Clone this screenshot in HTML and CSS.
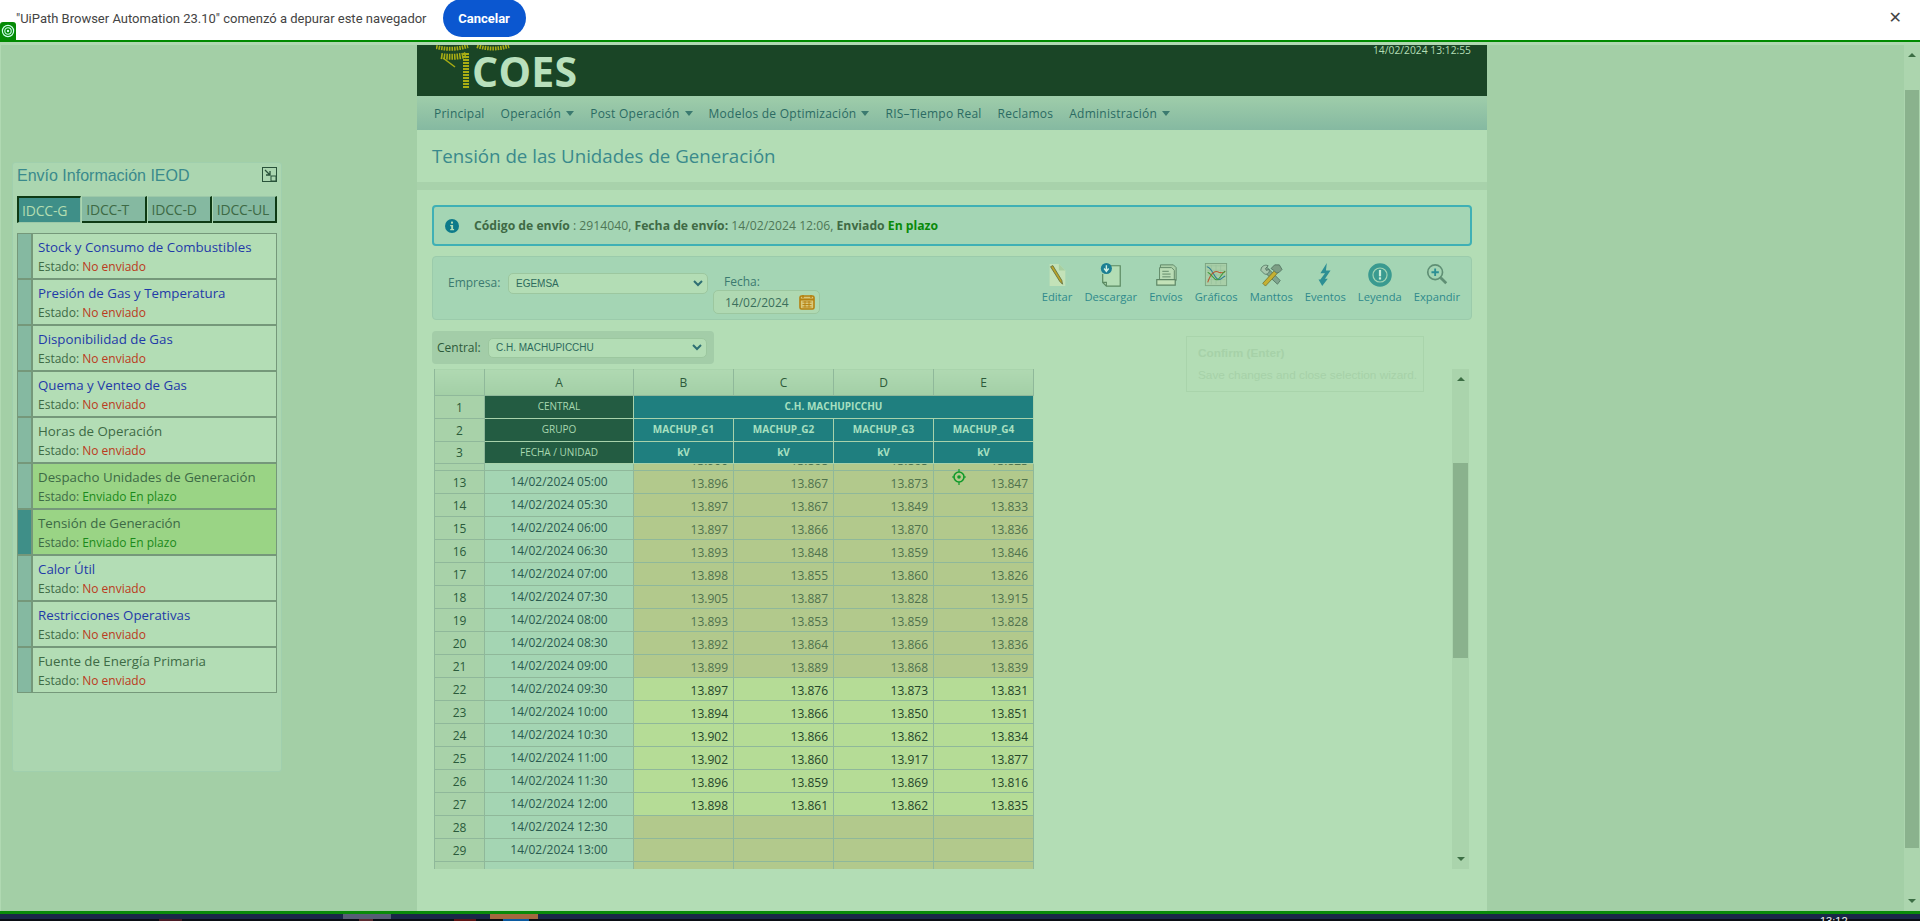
FILE: index.html
```html
<!DOCTYPE html>
<html lang="es">
<head>
<meta charset="utf-8">
<title>Tensión de las Unidades de Generación</title>
<link rel="stylesheet" href="styles.css">
</head>
<body>
<div class="debugbar">
  <span class="debug-text">"UiPath Browser Automation 23.10" comenzó a depurar este navegador</span>
  <button class="debug-btn">Cancelar</button>
  <span class="debug-close">✕</span>
  <span class="debug-badge"><svg width="14" height="14" viewBox="0 0 14 14"><circle cx="7" cy="7" r="5.6" fill="none" stroke="#cfe" stroke-width="1.2"/><circle cx="7" cy="7" r="3.2" fill="none" stroke="#cfe" stroke-width="1.1"/><circle cx="7" cy="7" r="1.2" fill="#cfe"/></svg></span>
</div>
<div class="page">
  <aside class="side">
    <section class="panel">
      <div class="panel-head">
        <h2 class="panel-title">Envío Información IEOD</h2>
        <svg class="panel-icon" width="15" height="15" viewBox="0 0 15 15"><rect x=".5" y=".5" width="14" height="14" fill="none" stroke="#29523a"/><path d="M3 3l5 5M8 4v4H4" fill="none" stroke="#29523a" stroke-width="1.3"/><rect x="9" y="9" width="5" height="5" fill="#abd6b0" stroke="#29523a"/></svg>
      </div>
      <div class="tabs">
        <span class="tab active">IDCC-G</span>
        <span class="tab">IDCC-T</span>
        <span class="tab">IDCC-D</span>
        <span class="tab">IDCC-UL</span>
      </div>
      <ul class="items">
        <li class="item"><i class="mark"></i><div class="item-body"><a class="link">Stock y Consumo de Combustibles</a><p class="state">Estado: <span class="bad">No enviado</span></p></div></li>
        <li class="item"><i class="mark"></i><div class="item-body"><a class="link">Presión de Gas y Temperatura</a><p class="state">Estado: <span class="bad">No enviado</span></p></div></li>
        <li class="item"><i class="mark"></i><div class="item-body"><a class="link">Disponibilidad de Gas</a><p class="state">Estado: <span class="bad">No enviado</span></p></div></li>
        <li class="item"><i class="mark"></i><div class="item-body"><a class="link">Quema y Venteo de Gas</a><p class="state">Estado: <span class="bad">No enviado</span></p></div></li>
        <li class="item"><i class="mark"></i><div class="item-body"><a class="plain">Horas de Operación</a><p class="state">Estado: <span class="bad">No enviado</span></p></div></li>
        <li class="item sent"><i class="mark"></i><div class="item-body"><a class="plain">Despacho Unidades de Generación</a><p class="state">Estado: <span class="good">Enviado En plazo</span></p></div></li>
        <li class="item sent current"><i class="mark"></i><div class="item-body"><a class="plain">Tensión de Generación</a><p class="state">Estado: <span class="good">Enviado En plazo</span></p></div></li>
        <li class="item"><i class="mark"></i><div class="item-body"><a class="link">Calor Útil</a><p class="state">Estado: <span class="bad">No enviado</span></p></div></li>
        <li class="item"><i class="mark"></i><div class="item-body"><a class="link">Restricciones Operativas</a><p class="state">Estado: <span class="bad">No enviado</span></p></div></li>
        <li class="item"><i class="mark"></i><div class="item-body"><a class="plain">Fuente de Energía Primaria</a><p class="state">Estado: <span class="bad">No enviado</span></p></div></li>
      </ul>
    </section>
  </aside>

  <main class="main">
    <header class="brand">
      <div class="logo">
        <svg class="logo-mark" width="74" height="45" viewBox="0 0 74 45">
          <g fill="none" stroke="#a9ad14">
            <path d="M0 2Q16 6 32 1" stroke-width="4" stroke-dasharray="1.6 1"/>
            <path d="M41 1Q57 6 73 1" stroke-width="4" stroke-dasharray="1.6 1"/>
            <path d="M5 11Q18 13 30 10" stroke-width="6" stroke-dasharray="1.6 1"/>
            <path d="M30 8V44" stroke-width="6" stroke-dasharray="2 1"/>
            <path d="M7 13L19 22" stroke-width="1.500"/>
          </g>
        </svg>
        <span class="logo-text">COES</span>
      </div>
      <span class="clock">14/02/2024 13:12:55</span>
    </header>
    <nav class="nav">
      <a class="nav-item">Principal</a>
      <a class="nav-item caret">Operación</a>
      <a class="nav-item caret">Post Operación</a>
      <a class="nav-item caret">Modelos de Optimización</a>
      <a class="nav-item">RIS–Tiempo Real</a>
      <a class="nav-item">Reclamos</a>
      <a class="nav-item caret">Administración</a>
    </nav>
    <div class="title-band"><h1 class="title">Tensión de las Unidades de Generación</h1></div>
    <div class="content">
      <div class="alert">
        <svg class="alert-icon" width="14" height="14" viewBox="0 0 14 14"><circle cx="7" cy="7" r="7" fill="#0d7a8a"/><rect x="6" y="2.6" width="2" height="2" fill="#b3ddb5"/><path d="M5.2 6h2.9v4h1v1.3H5.2V10h1V7.300H5.200z" fill="#b3ddb5"/></svg>
        <span><b>Código de envío</b> : 2914040, <b>Fecha de envío:</b> 14/02/2024 12:06, <b>Enviado</b> <b class="ontime">En plazo</b></span>
      </div>

      <div class="filters">
        <label class="field-label emp-label">Empresa:</label>
        <div class="select sel-empresa"><span>EGEMSA</span><svg width="10" height="7" viewBox="0 0 10 7"><path d="M1 1l4 4 4-4" fill="none" stroke="#2e6f73" stroke-width="2"/></svg></div>
        <div class="date-field">
          <label class="field-label date-label">Fecha:</label>
          <div class="date-input"><span>14/02/2024</span>
            <svg width="16" height="16" viewBox="0 0 16 16"><rect x="1" y="2" width="14" height="13" rx="1.500" fill="#d9c87a" stroke="#b5800f" stroke-width="1.600"/><path d="M1 5.500h14" stroke="#b5800f" stroke-width="2"/><path d="M4 1v3M12 1v3" stroke="#b5800f" stroke-width="1.400"/><path d="M3.500 8h9M3.500 10.500h9M3.500 13h9M6 7v6.500M10 7v6.500" stroke="#b5800f" stroke-width=".9"/></svg>
          </div>
        </div>
        <div class="tools">
          <a class="tool"><svg width="24" height="26" viewBox="0 0 24 26"><path d="M4 1h10l7 7v17H4z" fill="#c3e2b8"/><path d="M14 1v7h7" fill="#a8cfa0"/><path d="M5 4l10 16 3 3-.8-4.200L7.500 2.800z" fill="#b9a52a" stroke="#56623a" stroke-width=".8"/></svg><span>Editar</span></a>
          <a class="tool"><svg width="24" height="26" viewBox="0 0 24 26"><path d="M8 3h14v22H7l-4-4V12" fill="#b3ddb5" stroke="#5b8a62" stroke-width="1.300"/><path d="M3 21h4v4" fill="none" stroke="#5b8a62" stroke-width="1.200"/><circle cx="7" cy="6" r="6" fill="#1c7f93"/><path d="M7 2.500v5M4.500 6L7 9l2.500-3" fill="none" stroke="#cfeee0" stroke-width="1.500"/></svg><span>Descargar</span></a>
          <a class="tool"><svg width="24" height="26" viewBox="0 0 24 26"><path d="M6 2h14l3 3v14H6z" fill="#a9cfa8" stroke="#5d8665"/><path d="M5 5h13l3 3v11H5z" fill="#b9dcb5" stroke="#5d8665"/><path d="M8 9h7M8 12h9M8 15h9" stroke="#5d8665"/><path d="M2 18h20v6H2z" fill="#c3e2b8" stroke="#5d8665" stroke-width="1.300"/></svg><span>Envíos</span></a>
          <a class="tool"><svg width="24" height="26" viewBox="0 0 24 26"><rect x=".5" y=".5" width="23" height="24" fill="#a9cfa8" stroke="#7ba381"/><path d="M2 3h20M2 8h20M2 13h20M2 18h20M7 2v21M12 2v21M17 2v21" stroke="#97c19b" stroke-width=".7"/><path d="M2 4c6 0 8 14 13 14 3 0 4-3 7-4" fill="none" stroke="#2d7c92" stroke-width="1.200"/><path d="M3 21c4-12 9-13 12-11 3 1 5 1 7-1" fill="none" stroke="#b85a33" stroke-width="1.100"/><path d="M3 10c5 2 7 10 11 8 3-2 5-8 8-9" fill="none" stroke="#3f9a3c" stroke-width="1.100"/></svg><span>Gráficos</span></a>
          <a class="tool"><svg width="26" height="26" viewBox="0 0 26 26"><path d="M3 5l6 0 14 14-3 4L6 10z" fill="#7fa58f" stroke="#4b6d5a" stroke-width=".8"/><path d="M2 8c0-4 4-7 8-5l-3 3 1 2 3-1c1 3-2 6-5 5z" fill="#a8c8ae" stroke="#4b6d5a" stroke-width=".8"/><path d="M4 22L17 8l3 3L7 25z" fill="#c5b032" stroke="#6e6c28" stroke-width=".8"/><path d="M13 6l4-4h5l3 5-3 3-3 1-3-3z" fill="#7d9e85" stroke="#4b6d5a" stroke-width=".8"/></svg><span>Manttos</span></a>
          <a class="tool"><svg width="16" height="26" viewBox="0 0 16 26"><path d="M10 0L3 11h5L3 18H1l4 7 6-8H8l6-9H9z" fill="#2d8f94"/></svg><span>Eventos</span></a>
          <a class="tool"><svg width="26" height="26" viewBox="0 0 26 26"><circle cx="13" cy="13" r="10.500" fill="#a4d5b4" stroke="#3a9a90" stroke-width="4.500"/><circle cx="13" cy="13" r="7" fill="#3a9a90"/><rect x="11.800" y="7.500" width="2.400" height="7" fill="#c9ecd8"/><rect x="11.800" y="15.500" width="2.400" height="2.400" fill="#c9ecd8"/></svg><span>Leyenda</span></a>
          <a class="tool"><svg width="24" height="26" viewBox="0 0 24 26"><circle cx="10" cy="10" r="8" fill="none" stroke="#5f8f74" stroke-width="1.800"/><path d="M6 10h8M10 6v8" stroke="#2d8f94" stroke-width="2"/><path d="M16 16l6 6" stroke="#5f8f74" stroke-width="3"/></svg><span>Expandir</span></a>
        </div>
      </div>

      <div class="central">
        <label class="central-label">Central:</label>
        <div class="select sel-central"><span>C.H. MACHUPICCHU</span><svg width="10" height="7" viewBox="0 0 10 7"><path d="M1 1l4 4 4-4" fill="none" stroke="#2e6f73" stroke-width="2"/></svg></div>
      </div>

      <div class="sheet-wrap">
        <div class="sheet">
          <table class="grid grid-head">
            <colgroup><col class="c0"><col class="c1"><col class="c2"><col class="c2"><col class="c2"><col class="c2"></colgroup>
            <tr class="letters"><th></th><th>A</th><th>B</th><th>C</th><th>D</th><th>E</th></tr>
            <tr><th class="rn">1</th><td class="dk">CENTRAL</td><td class="tl" colspan="4">C.H. MACHUPICCHU</td></tr>
            <tr><th class="rn">2</th><td class="dk">GRUPO</td><td class="tl">MACHUP_G1</td><td class="tl">MACHUP_G2</td><td class="tl">MACHUP_G3</td><td class="tl">MACHUP_G4</td></tr>
            <tr class="last-head"><th class="rn">3</th><td class="dk">FECHA / UNIDAD</td><td class="tl">kV</td><td class="tl">kV</td><td class="tl">kV</td><td class="tl">kV</td></tr>
          </table>
          <div class="grid-clip">
            <table class="grid grid-body">
              <colgroup><col class="c0"><col class="c1"><col class="c2"><col class="c2"><col class="c2"><col class="c2"></colgroup>
              <tr class="late"><th class="rn"></th><td class="dt"></td><td>13.900</td><td>13.868</td><td>13.865</td><td>13.823</td></tr>
              <tr class="late"><th class="rn">13</th><td class="dt">14/02/2024 05:00</td><td>13.896</td><td>13.867</td><td>13.873</td><td>13.847</td></tr>
              <tr class="late"><th class="rn">14</th><td class="dt">14/02/2024 05:30</td><td>13.897</td><td>13.867</td><td>13.849</td><td>13.833</td></tr>
              <tr class="late"><th class="rn">15</th><td class="dt">14/02/2024 06:00</td><td>13.897</td><td>13.866</td><td>13.870</td><td>13.836</td></tr>
              <tr class="late"><th class="rn">16</th><td class="dt">14/02/2024 06:30</td><td>13.893</td><td>13.848</td><td>13.859</td><td>13.846</td></tr>
              <tr class="late"><th class="rn">17</th><td class="dt">14/02/2024 07:00</td><td>13.898</td><td>13.855</td><td>13.860</td><td>13.826</td></tr>
              <tr class="late"><th class="rn">18</th><td class="dt">14/02/2024 07:30</td><td>13.905</td><td>13.887</td><td>13.828</td><td>13.915</td></tr>
              <tr class="late"><th class="rn">19</th><td class="dt">14/02/2024 08:00</td><td>13.893</td><td>13.853</td><td>13.859</td><td>13.828</td></tr>
              <tr class="late"><th class="rn">20</th><td class="dt">14/02/2024 08:30</td><td>13.892</td><td>13.864</td><td>13.866</td><td>13.836</td></tr>
              <tr class="late"><th class="rn">21</th><td class="dt">14/02/2024 09:00</td><td>13.899</td><td>13.889</td><td>13.868</td><td>13.839</td></tr>
              <tr class="ok"><th class="rn">22</th><td class="dt">14/02/2024 09:30</td><td>13.897</td><td>13.876</td><td>13.873</td><td>13.831</td></tr>
              <tr class="ok"><th class="rn">23</th><td class="dt">14/02/2024 10:00</td><td>13.894</td><td>13.866</td><td>13.850</td><td>13.851</td></tr>
              <tr class="ok"><th class="rn">24</th><td class="dt">14/02/2024 10:30</td><td>13.902</td><td>13.866</td><td>13.862</td><td>13.834</td></tr>
              <tr class="ok"><th class="rn">25</th><td class="dt">14/02/2024 11:00</td><td>13.902</td><td>13.860</td><td>13.917</td><td>13.877</td></tr>
              <tr class="ok"><th class="rn">26</th><td class="dt">14/02/2024 11:30</td><td>13.896</td><td>13.859</td><td>13.869</td><td>13.816</td></tr>
              <tr class="ok"><th class="rn">27</th><td class="dt">14/02/2024 12:00</td><td>13.898</td><td>13.861</td><td>13.862</td><td>13.835</td></tr>
              <tr class="late"><th class="rn">28</th><td class="dt">14/02/2024 12:30</td><td></td><td></td><td></td><td></td></tr>
              <tr class="late"><th class="rn">29</th><td class="dt">14/02/2024 13:00</td><td></td><td></td><td></td><td></td></tr>
              <tr class="late"><th class="rn"></th><td class="dt"></td><td></td><td></td><td></td><td></td></tr>
            </table>
          </div>
        </div>
        <div class="vscroll inner-scroll">
          <span class="arrow up"></span>
          <div class="track"><div class="thumb"></div></div>
          <span class="arrow down"></span>
        </div>
        <div class="wizard-tip">
          <strong>Confirm (Enter)</strong>
          <span>Save changes and close selection wizard.</span>
        </div>
        <svg class="target" width="14" height="16" viewBox="0 0 14 16"><circle cx="7" cy="8" r="5" fill="none" stroke="#0f9a2a" stroke-width="1.600"/><circle cx="7" cy="8" r="1.800" fill="#0f9a2a"/><path d="M7 0v3M7 13v3M0 8h2M12 8h2" stroke="#0f9a2a" stroke-width="1.200"/></svg>
      </div>
    </div>
  </main>

  <div class="right">
    <div class="vscroll page-scroll">
      <span class="arrow up"></span>
      <div class="track"><div class="thumb"></div></div>
      <span class="arrow down"></span>
    </div>
  </div>
</div>
<footer class="taskbar">
  <div class="task-strip">
    <i class="task task-gray"></i>
    <i class="task task-orange"></i>
  </div>
  <div class="task-icons">
    <i class="bit bit-a"></i>
    <i class="bit bit-b"></i>
    <i class="bit bit-c"></i>
    <i class="bit bit-d"></i>
  </div>
  <span class="task-clock">13:12</span>
</footer>
</body>
</html>
```

FILE: styles.css
```css
* { box-sizing: border-box; }
html, body { margin: 0; height: 921px; overflow: hidden; }
body { font-family: "Open Sans", "Liberation Sans", sans-serif; font-size: 12px; display: flex; flex-direction: column; background: #a3cfa6; color: #3d6a45; }
h1, h2, p, ul { margin: 0; padding: 0; }
ul { list-style: none; }

/* debugger bar */
.debugbar { height: 45px; flex: none; background: #fff; position: relative; display: flex; align-items: flex-start; padding-left: 16px; border-bottom: 3px solid #b0d9b2; box-shadow: inset 0 -2px 0 #008a00; }
.debug-text { font-family: Roboto, "Liberation Sans", sans-serif; font-size: 13px; color: #444; line-height: 37px; white-space: nowrap; }
.debug-btn { margin-left: 16px; width: 83px; height: 38px; margin-top: -1px; border: 0; border-radius: 19px; background: #0b57d0; color: #fff; font: 700 13px Roboto, "Liberation Sans", sans-serif; }
.debug-close { margin-left: auto; margin-right: 18px; font-family: "DejaVu Sans", sans-serif; font-size: 16px; line-height: 36px; color: #444; }
.debug-badge { position: absolute; left: 0; top: 22px; width: 16px; height: 18px; background: #058a05; border-radius: 3px 3px 0 0; display: flex; align-items: center; justify-content: center; }

/* layout */
.page { flex: 1; min-height: 0; display: flex; }
.side { width: 417px; flex: none; padding: 117px 0 0 12px; border-left: 1px solid #b0d9b2; }
.main { width: 1070px; flex: none; background: #b3ddb5; display: flex; flex-direction: column; min-height: 0; }
.right { flex: 1; display: flex; justify-content: flex-end; }

/* left panel */
.panel { width: 270px; margin-left: -1px; height: 610px; background: #abd6b0; border: 1px solid #a0cfad; border-radius: 3px; padding: 0 4px; }
.panel-head { height: 33px; display: flex; align-items: flex-start; justify-content: space-between; padding-top: 4px; }
.panel-title { font: 400 16px/16px "Liberation Sans", sans-serif; color: #3a8a8c; padding-top: 1px; }
.tabs { display: flex; gap: 1px; height: 27px; margin-bottom: 10px; }
.tab { flex: 1 1 0; background: #85b9a1; color: #3d6a45; display: flex; align-items: center; padding-left: 4px; font-size: 14px; letter-spacing: -.2px; border-right: 2px solid #0e3a14; border-bottom: 2px solid #0e3a14; border-top: 1px solid #9cc8a8; white-space: nowrap; }
.tab.active { background: #3f8f88; color: #b4ddb0; border: 0; border-left: 2px solid #0e3a14; border-top: 2px solid #0e3a14; border-bottom: 1px solid #9cc8a8; border-right: 1px solid #9cc8a8; padding-left: 3px; }
.items { border: 1px solid #75987a; }
.item { height: 46px; display: flex; background: #b3ddb5; border-bottom: 2px solid #75987a; }
.item:last-child { height: 44px; border-bottom: 0; }
.item.sent { background: #9ad485; }
.mark { width: 13px; flex: none; background: #85b9a1; border-right: 2px solid #75987a; box-sizing: content-box; }
.current .mark { background: #3f8f88; }
.item-body { padding: 4px 0 0 5px; font-size: 13.3px; line-height: 19px; white-space: nowrap; }
.link { color: #1f3aa8; display: block; }
.plain { color: #3d6a45; display: block; }
.state { font-size: 12px; line-height: 19px; color: #3d6a45; }
.bad { color: #bb3a20; }
.good { color: #1a8a1a; }

/* brand + nav */
.brand { height: 51px; flex: none; background: #1a4526; display: flex; justify-content: space-between; padding: 0 16px 0 19px; overflow: hidden; }
.logo { display: flex; align-items: flex-start; position: relative; }
.logo-mark { position: absolute; left: 0; top: 0; }
.logo-text { font: 700 41px/46px "Open Sans", sans-serif; letter-spacing: .3px; color: #b9e0bd; margin: 0 0 0 36px; padding-top: 3px; }
.clock { font-size: 10.3px; line-height: 10px; color: #b3ddb5; }
.nav { height: 34px; flex: none; background: linear-gradient(#9fcdaa, #85b9a1); display: flex; align-items: center; padding-left: 17px; gap: 16px; color: #2b6b63; }
.nav-item { font-size: 12px; letter-spacing: .25px; white-space: nowrap; }
.caret::after { content: ""; display: inline-block; margin-left: 5px; border: 4px solid transparent; border-top: 5px solid #3b7a70; border-bottom: 0; vertical-align: 2px; }
.title-band { height: 52px; flex: none; padding: 0 0 2px 15px; display: flex; align-items: center; }
.title { font-weight: 400; font-size: 18.7px; color: #3a8a8c; white-space: nowrap; }
.content { flex: 1; min-height: 0; border-top: 8px solid #a8d2ab; padding: 15px 15px 0; display: flex; flex-direction: column; }

/* alert */
.alert { height: 41px; flex: none; background: #a4d5b4; border: 2px solid #3fb0b5; border-radius: 4px; display: flex; align-items: center; gap: 15px; padding-left: 11px; color: #4f7756; font-size: 12.2px; }
.alert-icon { flex: none; }
.alert b { color: #3f6a45; }
.alert b.ontime { color: #0a8a0a; }

/* filters */
.filters { height: 64px; flex: none; margin-top: 10px; background: #a4d5b4; border: 1px solid #9bcbab; border-radius: 4px; display: flex; padding-left: 15px; position: relative; }
.field-label { color: #3b7a70; line-height: 17px; margin-top: 17px; }
.emp-label { width: 50px; flex: none; }
.select { background: #b3ddb5; border: 1px solid #9cc79f; border-radius: 5px; display: flex; align-items: center; justify-content: space-between; padding: 0 4px 0 7px; font: 10px "Liberation Sans", sans-serif; color: #2d6a5c; }
.sel-empresa { width: 200px; height: 21px; margin: 16px 0 0 10px; flex: none; }
.date-field { display: flex; flex-direction: column; margin-left: 5px; }
.date-label { margin: 16px 0 0 11px; line-height: 17px; }
.date-input { width: 107px; height: 24px; border: 1px solid #9cc79f; border-radius: 5px; background: #afd9b2; display: flex; align-items: center; justify-content: space-between; padding: 0 4px 0 11px; color: #3b6f5c; }
.tools { margin-left: auto; margin-right: 11px; display: flex; gap: 12px; padding-top: 6px; }
.tool { display: flex; flex-direction: column; align-items: center; color: #2f8a8c; height: 42px; }
.tool span { font-size: 11.2px; line-height: 17px; white-space: nowrap; margin-top: 1px; }

/* central */
.central { width: 282px; height: 33px; flex: none; margin-top: 11px; background: #a3cda8; border-radius: 4px; display: flex; align-items: center; padding-left: 5px; color: #2d5a3a; }
.central-label { width: 51px; flex: none; }
.sel-central { width: 219px; height: 20px; flex: none; }

/* sheet */
.sheet-wrap { flex: 1; min-height: 0; margin-top: 5px; display: flex; position: relative; align-items: flex-start; padding-left: 2px; }
.sheet { width: 600px; height: 500px; display: flex; flex-direction: column; overflow: hidden; flex: none; }
.grid { width: 599px; table-layout: fixed; border-collapse: collapse; font-size: 12px; }
.c0 { width: 50px; } .c1 { width: 149px; } .c2 { width: 100px; }
.grid th, .grid td { padding: 0; border: 1px solid #8fb89a; font-weight: 400; white-space: nowrap; overflow: hidden; }
.grid-head { flex: none; margin-top: -1px; }
.grid-head tr { height: 23px; }
.grid-head .letters { height: 27px; }
.grid-head .last-head { height: 22px; }
.letters th { background: linear-gradient(#b0d9b2, #a3cfa6); color: #2d5a3a; }
.rn { background: #a8d2a9; color: #2a5a3a; text-align: center; }
.dk, .tl { text-align: center; font-size: 10px; border-color: #a8d2ab !important; padding-bottom: 2px !important; }
.dk { background: #235c42; color: #a8d8b0; }
.tl { background: #1f7f7f; color: #a8e0c0; font-weight: 700 !important; }
.grid-clip { flex: 1; min-height: 0; overflow: hidden; }
.grid-body { margin-top: -17px; }
.grid-body tr { height: 23px; }
.grid-body td { text-align: right; padding: 3px 5px 0 0; line-height: 18px; }
.grid-body .dt { background: #a4d5b3; color: #2a5a50; text-align: center; padding: 0; }
.late td { background: #b2c98c; color: #4f714c; }
.ok td { background: #b5dc96; color: #24452a; }

/* scrollbars */
.vscroll { display: flex; flex-direction: column; align-items: stretch; flex: none; }
.inner-scroll { width: 17px; height: 500px; margin-left: 418px; background: #aad4ac; }
.page-scroll { width: 16px; height: 866px; background: #acd5ae; }
.arrow { height: 20px; flex: none; display: flex; align-items: center; justify-content: center; }
.arrow::before { content: ""; border: 4px solid transparent; }
.arrow.up::before { border-bottom: 4px solid #3c6e44; border-top: 0; }
.arrow.down::before { border-top: 4px solid #3c6e44; border-bottom: 0; }
.track { flex: 1; position: relative; padding: 0 1px; }
.inner-scroll .track { padding-top: 74px; }
.inner-scroll .thumb { height: 195px; background: #8ab28d; }
.page-scroll .track { padding-top: 25px; }
.page-scroll .thumb { height: 758px; background: #8ab28d; }

/* overlays */
.wizard-tip { position: absolute; left: 754px; top: -33px; width: 238px; height: 56px; border: 1px solid #a9d4ab; padding: 9px 11px; display: flex; flex-direction: column; gap: 8px; color: #a6d1a8; font: 11.8px "Liberation Sans", sans-serif; white-space: nowrap; }
.target { position: absolute; left: 520px; top: 100px; }

/* taskbar */
.taskbar { height: 10px; flex: none; position: relative; background: linear-gradient(#1a2748 71%, #0a0d14 71%); border-top: 3px solid #0a8a0a; overflow: hidden; }
.task-strip { display: flex; }
.task { display: block; width: 48px; height: 5px; }
.task-gray { margin-left: 343px; background: #565d75; }
.task-orange { margin-left: 99px; background: #a5683f; }
.task-icons { display: flex; height: 2px; }
.bit { display: block; height: 2px; }
.bit-a { width: 23px; margin-left: 159px; background: #4a1a24; }
.bit-b { width: 14px; margin-left: 177px; background: #5a2a30; }
.bit-c { width: 22px; margin-left: 81px; background: #5e1414; }
.bit-d { width: 26px; margin-left: 27px; background: #0b5aa0; }
.task-clock { position: absolute; left: 1820px; top: 1px; color: #eee; font: 11px/12px "Liberation Sans", sans-serif; }
```
